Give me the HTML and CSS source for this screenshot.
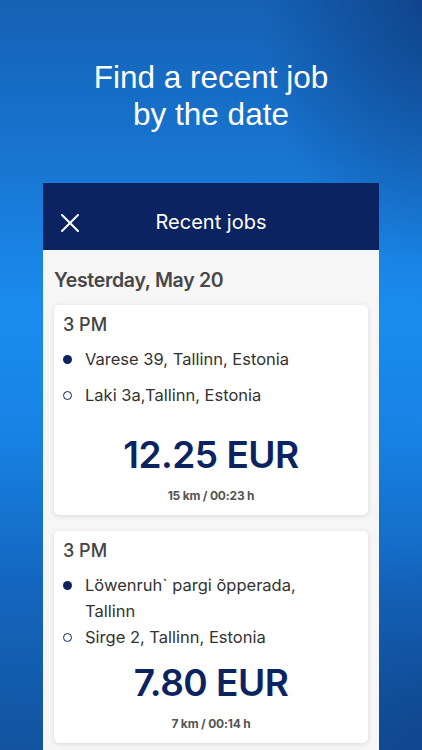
FILE: index.html
```html
<!DOCTYPE html>
<html lang="en">
<head>
  <meta charset="UTF-8">
  <title>Recent jobs</title>
  <link rel="stylesheet" href="styles.css">
</head>
<body>

  <h1 class="promo">Find a recent job<br>by the date</h1>

  <div class="phone">
    <div class="topbar">
      <svg class="close" width="20" height="20" viewBox="0 0 20 20">
        <path d="M2 2 L18 18 M18 2 L2 18" stroke="#fff" stroke-width="2" stroke-linecap="round"/>
      </svg>
      <span class="topbar-title">Recent jobs</span>
    </div>

    <div class="list">
      <h2 class="day">Yesterday, May 20</h2>

      <div class="job">
        <div class="job-time">3 PM</div>
        <div class="stop">
          <span class="dot dot-from"></span>
          <span class="stop-text">Varese 39, Tallinn, Estonia</span>
        </div>
        <div class="stop">
          <span class="dot dot-to"></span>
          <span class="stop-text">Laki 3a,Tallinn, Estonia</span>
        </div>
        <div class="price price-gap">12.25 EUR</div>
        <div class="meta">15 km / 00:23 h</div>
      </div>

      <div class="job">
        <div class="job-time">3 PM</div>
        <div class="stop stop-long">
          <span class="dot dot-from"></span>
          <span class="stop-text">Löwenruh` pargi õpperada,<br>Tallinn</span>
        </div>
        <div class="stop">
          <span class="dot dot-to"></span>
          <span class="stop-text">Sirge 2, Tallinn, Estonia</span>
        </div>
        <div class="price">7.80 EUR</div>
        <div class="meta">7 km / 00:14 h</div>
      </div>
    </div>
  </div>

</body>
</html>
```

FILE: styles.css
```css
html, body {
  height: 100%;
}

body {
  margin: 0;
  overflow: hidden;
  font-family: Inter, "Noto Sans", sans-serif;
  background:
    radial-gradient(ellipse 180px 260px at 440px 10px, rgba(10,40,100,0.55), rgba(10,40,100,0) 100%),
    radial-gradient(ellipse 200px 200px at 440px 740px, rgba(10,40,100,0.35), rgba(10,40,100,0) 100%),
    linear-gradient(180deg, #1561b5 0%, #1879d6 25%, #1a8cf0 42%, #1782e4 58%, #1466bf 78%, #12549f 100%);
}

.promo {
  margin: 0;
  padding-top: 59px;
  height: 124px;
  text-align: center;
  color: #fff;
  font-family: "Liberation Sans", Arial, sans-serif;
  font-weight: normal;
  font-size: 31.5px;
  line-height: 37px;
}

.phone {
  width: 336px;
  margin-left: 43px;
  background: #f6f6f6;
  height: 580px;
}

.topbar {
  height: 67px;
  background: #0b2461;
  display: flex;
  align-items: center;
  justify-content: center;
  position: relative;
  padding-top: 10px;
  box-sizing: border-box;
}

.close {
  position: absolute;
  left: 17px;
  top: 30px;
}

.topbar-title {
  color: #fff;
  font-size: 20px;
}

.list {
  padding: 0 11px;
}

.day {
  margin: 0;
  padding: 18px 0 13px;
  font-size: 19.5px;
  font-weight: 600;
  color: #474747;
  letter-spacing: -0.3px;
}

.job {
  background: #fff;
  border-radius: 5px;
  box-shadow: 0 1px 5px rgba(0,0,0,0.12);
  padding: 9px 9px 12px;
  margin-bottom: 16px;
}

.job-time {
  font-size: 18px;
  font-weight: 500;
  color: #444;
  margin-bottom: 11px;
}

.stop {
  display: flex;
  align-items: flex-start;
  font-size: 16.5px;
  line-height: 26px;
  color: #333;
  margin-bottom: 10px;
}

.stop-long {
  margin-bottom: 0;
}

.dot {
  width: 9px;
  height: 9px;
  border-radius: 50%;
  margin: 9px 13px 0 0;
  box-sizing: border-box;
  flex-shrink: 0;
}

.dot-from {
  background: #0b2461;
}

.dot-to {
  border: 1.5px solid #0b2461;
}

.price {
  text-align: center;
  color: #0b2461;
  font-size: 37px;
  font-weight: 600;
  letter-spacing: -0.5px;
  margin-top: 8px;
}

.price-gap {
  margin-top: 24px;
}

.meta {
  text-align: center;
  font-size: 12px;
  font-weight: 700;
  color: #555;
  margin-top: 11px;
  letter-spacing: -0.2px;
}
```
